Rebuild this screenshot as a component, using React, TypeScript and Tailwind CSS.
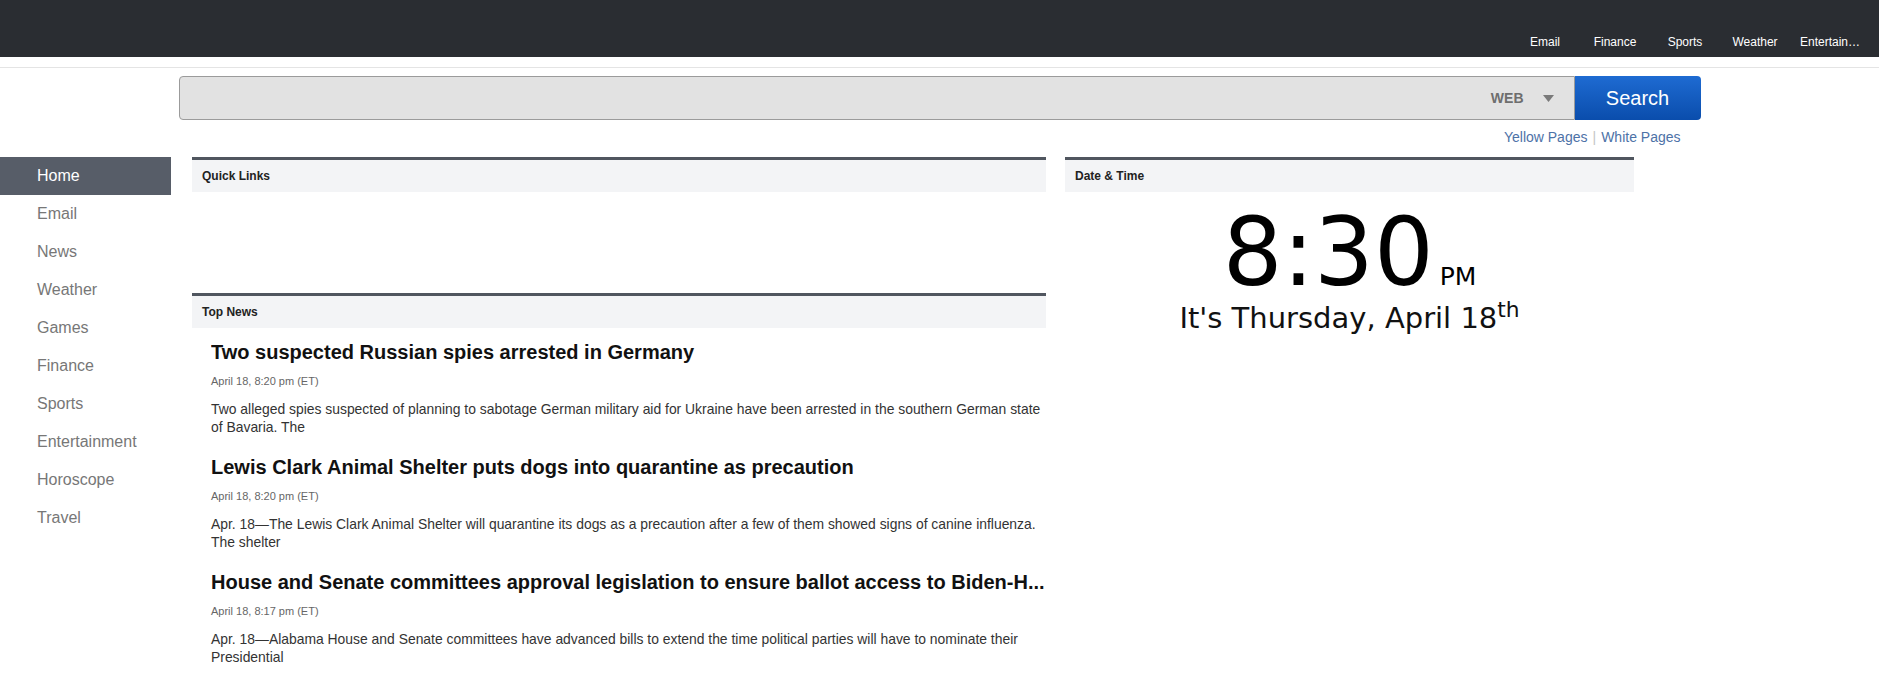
import React from 'react';

const topNav = ['Email', 'Finance', 'Sports', 'Weather'];

const sideNav = [
  'Home',
  'Email',
  'News',
  'Weather',
  'Games',
  'Finance',
  'Sports',
  'Entertainment',
  'Horoscope',
  'Travel',
];

const news = [
  {
    title: 'Two suspected Russian spies arrested in Germany',
    time: 'April 18, 8:20 pm (ET)',
    body: 'Two alleged spies suspected of planning to sabotage German military aid for Ukraine have been arrested in the southern German state of Bavaria. The',
  },
  {
    title: 'Lewis Clark Animal Shelter puts dogs into quarantine as precaution',
    time: 'April 18, 8:20 pm (ET)',
    body: 'Apr. 18\u2014The Lewis Clark Animal Shelter will quarantine its dogs as a precaution after a few of them showed signs of canine influenza. The shelter',
  },
  {
    title: 'House and Senate committees approval legislation to ensure ballot access to Biden-H...',
    time: 'April 18, 8:17 pm (ET)',
    body: 'Apr. 18\u2014Alabama House and Senate committees have advanced bills to extend the time political parties will have to nominate their Presidential',
  },
];

const PanelHeader: React.FC<{ title: string }> = ({ title }) => (
  <div className="h-[35px] border-t-[3px] border-[#50565f] bg-[#f3f4f6] px-[10px] flex items-center text-[12px] font-bold text-[#222]">
    {title}
  </div>
);

export default function App() {
  return (
    <div className="min-h-screen w-full bg-white font-['Liberation_Sans',Arial,sans-serif]">
      {/* Top bar */}
      <div className="h-[57px] bg-[#2a2d32] flex justify-end items-end pr-[17px] pb-[8px]">
        {topNav.map((item) => (
          <a
            key={item}
            className="w-[70px] px-[6px] text-center truncate text-[12px] leading-[14px] text-white"
          >
            {item}
          </a>
        ))}
        <a className="w-[72px] pl-[10px] pr-[1px] truncate text-[12px] leading-[14px] text-white">
          Entertainment
        </a>
      </div>
      <div className="h-[11px] border-b border-[#e4e4e4]" />

      {/* Search */}
      <div className="w-[1522px] mx-auto mt-[8px]">
        <div className="h-[44px] flex">
          <div className="flex-1 bg-[#e2e2e2] border border-[#9b9b9b] rounded-l-[4px] flex items-center justify-end pr-[20px]">
            <span className="text-[14px] font-bold text-[#6e6e6e]">WEB</span>
            <svg className="ml-[19px] w-[11px] h-[7px]" viewBox="0 0 11 7" aria-hidden="true">
              <path d="M0 0h11L5.5 7z" fill="#7a7a7a" />
            </svg>
          </div>
          <button className="w-[126px] rounded-r-[4px] bg-gradient-to-b from-[#1e6bd2] to-[#0a4dac] text-white text-[20px]">
            Search
          </button>
        </div>
        <div className="mt-[9px] flex justify-end pr-[20px] text-[14px] leading-[16px] text-[#4d72a7]">
          <a>Yellow Pages</a>
          <span className="mx-[5px] text-[#c4c4c4]">|</span>
          <a>White Pages</a>
        </div>
      </div>

      {/* Main */}
      <div className="mt-[12px] flex items-start">
        <nav className="w-[171px] shrink-0 flex flex-col">
          {sideNav.map((item, i) => (
            <a
              key={item}
              className={`h-[38px] flex items-center pl-[37px] text-[16px] ${
                i === 0 ? 'bg-[#575d68] text-white' : 'text-[#777]'
              }`}
            >
              {item}
            </a>
          ))}
        </nav>

        <div className="ml-[21px] flex gap-[19px] items-start">
          {/* Left column */}
          <div className="w-[854px]">
            <PanelHeader title="Quick Links" />
            <div className="h-[101px]" />
            <PanelHeader title="Top News" />
            <div className="pt-[12px] pl-[19px] flex flex-col gap-[19px]">
              {news.map((n) => (
                <article key={n.title}>
                  <h2 className="text-[20px] leading-[24px] font-bold text-[#111] truncate">
                    {n.title}
                  </h2>
                  <div className="mt-[10px] text-[11px] leading-[14px] text-[#666]">{n.time}</div>
                  <p className="mt-[12px] text-[13.9px] leading-[18px] text-[#333]">{n.body}</p>
                </article>
              ))}
            </div>
          </div>

          {/* Right column */}
          <div className="w-[569px]">
            <PanelHeader title="Date & Time" />
            <div className="font-['DejaVu_Sans',Verdana,sans-serif] text-black flex flex-col items-center">
              <div className="mt-[14px] flex items-baseline">
                <span className="text-[94px] leading-none">8:30</span>
                <span className="ml-[6px] text-[25px] leading-none">PM</span>
              </div>
              <div className="mt-[1px] text-[29px] leading-[35px] text-[#111]">
                It's Thursday, April 18<sup>th</sup>
              </div>
            </div>
          </div>
        </div>
      </div>
    </div>
  );
}
